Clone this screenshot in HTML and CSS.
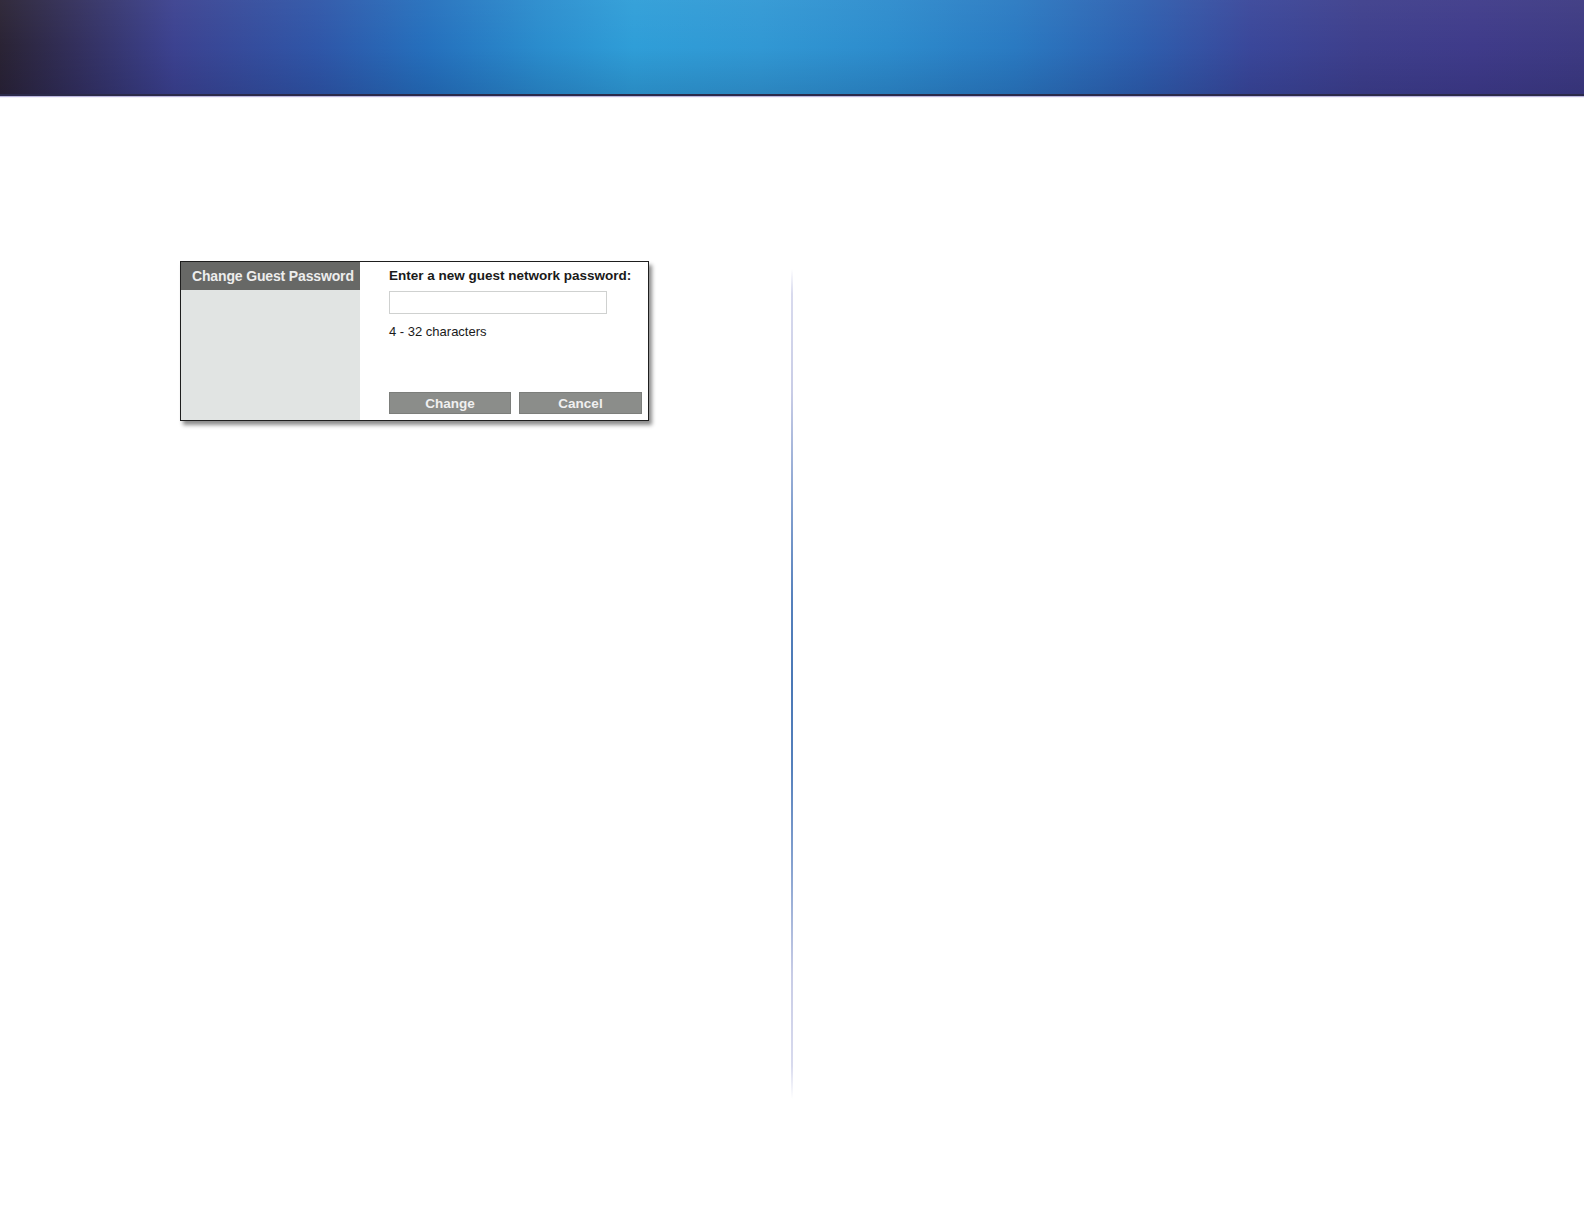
FILE: index.html
```html
<!DOCTYPE html>
<html>
<head>
<meta charset="utf-8">
<link rel="stylesheet" href="styles.css">
</head>
<body>
<header class="banner"></header>
<main class="page">
  <section class="col-left">
    <div class="dialog">
      <div class="side">
        <div class="side-title">Change Guest Password</div>
      </div>
      <div class="form">
        <div class="label">Enter a new guest network password:</div>
        <input class="field" type="text">
        <div class="hint">4 - 32 characters</div>
        <div class="buttons">
          <button class="btn">Change</button>
          <button class="btn">Cancel</button>
        </div>
      </div>
    </div>
  </section>
  <div class="divider"></div>
  <section class="col-right"></section>
</main>
</body>
</html>
```
FILE: styles.css
```css
html, body {
  margin: 0;
  padding: 0;
  background: #ffffff;
  font-family: "Liberation Sans", Arial, sans-serif;
}
.banner {
  height: 94px;
  border-bottom: 2px solid #2b2a4a;
  box-shadow: 0 1px 1px rgba(120, 110, 190, 0.5);
  background:
    linear-gradient(180deg, rgba(255,255,255,0.04) 0%, rgba(0,0,0,0) 50%, rgba(0,0,40,0.12) 100%),
    linear-gradient(90deg,
      #2a2334 0%,
      #33305e 5%,
      #3c4290 11%,
      #2f56a8 20%,
      #2570bd 27%,
      #2a8ccd 34%,
      #2f9ed8 40%,
      #3198d4 48%,
      #2d8ccd 56%,
      #2a7ac2 64%,
      #2e5faf 72%,
      #3a479a 79%,
      #3e3f8c 86%,
      #3f3b8a 93%,
      #3d3a82 100%);
}
.page {
  display: flex;
  padding-top: 165px;
}
.col-left {
  width: 791px;
  padding-left: 180px;
  box-sizing: border-box;
}
.dialog {
  display: flex;
  width: 469px;
  height: 160px;
  box-sizing: border-box;
  border: 1px solid #1e1e1e;
  background: #fff;
  box-shadow: 3px 4px 4px rgba(0, 0, 0, 0.45);
}
.side {
  width: 179px;
  background: #e1e4e3;
}
.side-title {
  height: 28px;
  background: #676866;
  color: #ededed;
  font-weight: bold;
  font-size: 14px;
  line-height: 28px;
  padding-left: 11px;
  letter-spacing: -0.15px;
  white-space: nowrap;
  overflow: hidden;
}
.form {
  flex: 1;
  padding: 6px 0 0 29px;
  display: flex;
  flex-direction: column;
}
.label {
  font-weight: bold;
  font-size: 13.5px;
  color: #1a1a1a;
  line-height: 16px;
  white-space: nowrap;
}
.field {
  width: 218px;
  height: 23px;
  box-sizing: border-box;
  margin: 7px 0 0 0;
  border: 1px solid #cfd1d0;
  background: #fff;
  padding: 0;
}
.hint {
  margin-top: 10px;
  font-size: 13px;
  color: #1a1a1a;
  line-height: 16px;
}
.buttons {
  display: flex;
  gap: 8px;
  margin-top: 52px;
}
.btn {
  width: 122px;
  height: 22px;
  border: 1px solid #7c7e7b;
  background: #8b8d8a;
  color: #f0f0f0;
  font-family: "Liberation Sans", Arial, sans-serif;
  font-weight: bold;
  font-size: 13.5px;
  padding: 0;
}
.btn + .btn {
  width: 123px;
}
.divider {
  width: 2px;
  height: 830px;
  margin-top: 8px;
  background: linear-gradient(180deg,
    rgba(210, 212, 236, 0) 0%,
    #d8daee 3%,
    #c8cce6 15%,
    #86a2d0 28%,
    #5580bc 40%,
    #4a78b6 50%,
    #5580bc 60%,
    #86a2d0 72%,
    #c8cce6 85%,
    #d8daee 96%,
    rgba(210, 212, 236, 0) 100%);
}
.col-right {
  flex: 1;
}
```
